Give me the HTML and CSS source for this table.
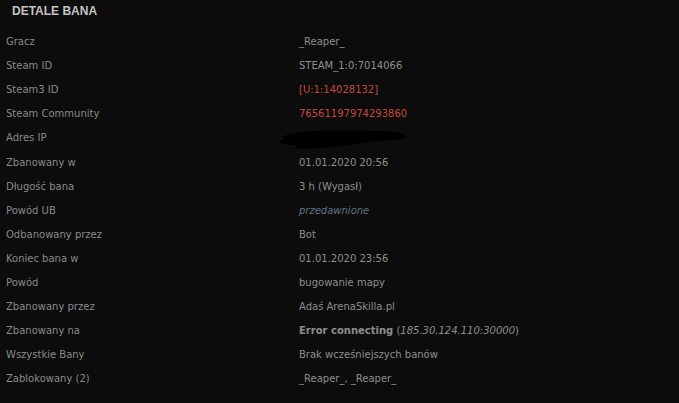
FILE: index.html
```html
<!DOCTYPE html>
<html lang="pl">
<head>
<meta charset="utf-8">
<title>Detale bana</title>
<link rel="stylesheet" href="styles.css">
</head>
<body>
<div class="panel">
  <div class="title">DETALE BANA</div>
  <div class="details">
    <div class="row"><div class="label">Gracz</div><div class="value">_Reaper_</div></div>
    <div class="row"><div class="label">Steam ID</div><div class="value">STEAM_1:0:7014066</div></div>
    <div class="row"><div class="label">Steam3 ID</div><div class="value red">[U:1:14028132]</div></div>
    <div class="row"><div class="label">Steam Community</div><div class="value red">76561197974293860</div></div>
    <div class="row"><div class="label">Adres IP</div><div class="value"><svg class="redact" width="130" height="22" viewBox="0 0 130 22"><path d="M4 8 C12 4 22 3 34 2 C52 1 80 1 100 2 C112 2 122 3 127 6 C129 9 124 11 116 11 C106 12 94 12 84 14 C72 16 58 18 44 19 C32 20 22 20 16 19 C22 17 20 16 10 16 C4 15 0 13 2 11 C6 10 6 9 4 8 Z" fill="#000"/></svg></div></div>
    <div class="row"><div class="label">Zbanowany w</div><div class="value">01.01.2020 20:56</div></div>
    <div class="row"><div class="label">Długość bana</div><div class="value">3 h (Wygasł)</div></div>
    <div class="row"><div class="label">Powód UB</div><div class="value note">przedawnione</div></div>
    <div class="row"><div class="label">Odbanowany przez</div><div class="value">Bot</div></div>
    <div class="row"><div class="label">Koniec bana w</div><div class="value">01.01.2020 23:56</div></div>
    <div class="row"><div class="label">Powód</div><div class="value">bugowanie mapy</div></div>
    <div class="row"><div class="label">Zbanowany przez</div><div class="value">Adaś ArenaSkilla.pl</div></div>
    <div class="row"><div class="label">Zbanowany na</div><div class="value"><b>Error connecting</b> (<i>185.30.124.110:30000</i>)</div></div>
    <div class="row"><div class="label">Wszystkie Bany</div><div class="value">Brak wcześniejszych banów</div></div>
    <div class="row"><div class="label">Zablokowany (2)</div><div class="value">_Reaper_, _Reaper_</div></div>
  </div>
</div>
</body>
</html>
```
FILE: styles.css
```css
html, body {
  margin: 0;
  padding: 0;
  background: #0c0c0c;
}
.panel {
  width: 679px;
  height: 403px;
  background: #0c0c0c;
  overflow: hidden;
}
.title {
  padding: 4px 12px 0;
  height: 18px;
  font-family: "Liberation Sans", Arial, sans-serif;
  font-weight: bold;
  font-size: 12px;
  line-height: 14px;
  color: #c4c4c4;
}
.details {
  margin-top: 8px;
  display: flex;
  flex-direction: column;
}
.row {
  display: grid;
  grid-template-columns: 293px 1fr;
  height: 24.1px;
  align-items: center;
  padding-left: 6px;
  font-family: "DejaVu Sans", Verdana, sans-serif;
  font-size: 10px;
  line-height: 12px;
}
.label {
  color: #8a8a8a;
}
.value {
  color: #8e8e8e;
  position: relative;
}
.value.red {
  color: #c5483a;
}
.value.note {
  font-style: italic;
  color: #5e7482;
}
.value b {
  font-weight: bold;
  color: #8e8e8e;
}
.redact {
  position: absolute;
  left: -21px;
  top: -9px;
}
```
